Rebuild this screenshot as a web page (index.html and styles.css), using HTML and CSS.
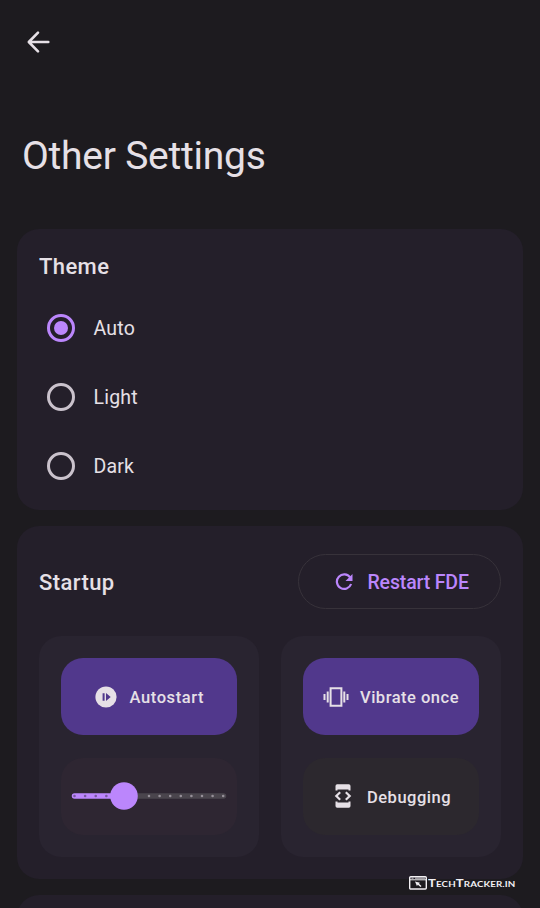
FILE: index.html
```html
<!DOCTYPE html>
<html lang="en">
<head>
<meta charset="utf-8">
<title>Other Settings</title>
<link rel="stylesheet" href="styles.css">
</head>
<body>
<div class="screen">
  <header class="header">
    <svg class="back" width="24" height="24" viewBox="0 0 24 24"><path d="M12 2.700 2.800 12l9.200 9.300M3.500 12H22.300" fill="none" stroke="currentColor" stroke-width="2.600" stroke-linecap="round" stroke-linejoin="round"/></svg>
    <h1 class="title"><span>Other Settings</span></h1>
  </header>
  <main class="cards">
    <section class="card theme">
      <h2 class="heading">Theme</h2>
      <div class="options">
        <label class="option"><span class="radio checked"></span><span class="label">Auto</span></label>
        <label class="option"><span class="radio"></span><span class="label">Light</span></label>
        <label class="option"><span class="radio"></span><span class="label">Dark</span></label>
      </div>
    </section>
    <section class="card startup">
      <div class="row">
        <h2 class="heading">Startup</h2>
        <button class="restart">
          <svg width="18" height="18" viewBox="0 0 18 18"><path d="M15.200 4.500A7.300 7.300 0 1 0 16.100 11" fill="none" stroke="currentColor" stroke-width="2.200"/><path d="M17.500 1v7h-7z" fill="currentColor"/></svg>
          <span class="label">Restart FDE</span>
        </button>
      </div>
      <div class="groups">
        <div class="group">
          <button class="tile active autostart">
            <svg width="22" height="22" viewBox="0 0 22 22"><circle cx="11" cy="11" r="10.600" fill="currentColor"/><path d="M7.600 7.300h2v7.400h-2zM11 7l4.700 4-4.700 4z" fill="#51388c"/></svg>
            <span class="label">Autostart</span>
          </button>
          <div class="tile slider">
            <svg width="156" height="28" viewBox="0 0 156 28">
              <path d="M53 14h99.500" stroke="#4a454d" stroke-width="5.500" stroke-linecap="round"/>
              <path d="M3.500 14h50" stroke="#bb86fc" stroke-width="5.500" stroke-linecap="round"/>
              <path d="M3.500 14H50" stroke="#765a9d" stroke-width="2.600" stroke-linecap="round" stroke-dasharray="0 10.620"/>
              <path d="M78 14h75" stroke="#969099" stroke-width="2.600" stroke-linecap="round" stroke-dasharray="0 10.600"/>
              <circle cx="53" cy="14" r="13.800" fill="#bb86fc"/>
            </svg>
          </div>
        </div>
        <div class="group">
          <button class="tile active vibrate">
            <svg width="26" height="22" viewBox="0 0 26 22"><path d="M7.600 2.300h10.800v17.400H7.600zM4.700 5.500v11M1.500 8v6M21.300 5.500v11M24.500 8v6" fill="none" stroke="currentColor" stroke-width="2"/></svg>
            <span class="label">Vibrate once</span>
          </button>
          <button class="tile debug">
            <svg width="18" height="24" viewBox="0 0 18 24"><path d="M1.500 6.500V2Q1.500.300 3.200.300H14.800Q16.500.300 16.500 2v4.500h-2V5.500h-11v1zM1.500 17.500V22q0 1.700 1.700 1.700h11.600q1.700 0 1.700-1.700v-4.500h-2v1h-11v-1z" fill="currentColor"/><path d="M6.200 8.200 2.300 12l3.900 3.800M11.800 8.200l3.900 3.800-3.900 3.800" fill="none" stroke="currentColor" stroke-width="2.200"/></svg>
            <span class="label">Debugging</span>
          </button>
        </div>
      </div>
    </section>
    <section class="card next"></section>
  </main>
  <div class="watermark">
    <svg width="18" height="14" viewBox="0 0 18 14"><rect x=".7" y=".7" width="16.600" height="12.300" rx="1" fill="none" stroke="currentColor" stroke-width="1.400"/><path d="M1 3.800h16" stroke="currentColor"/><path d="M2.500 2.200h2M6 2.200h10" stroke="currentColor" stroke-width=".8"/><path d="m6 5.500 5 1.200-1 1 2.500 2.300-1 1-2.600-2.300-1 1.300z" fill="currentColor"/></svg>
    <span class="brand">T<small>ECH</small>T<small>RACKER.IN</small></span>
  </div>
</div>
</body>
</html>
```
FILE: styles.css
```css
* { box-sizing: border-box; }
body { margin: 0; background: #1d1b1f; color: #e6e0e6; font-family: Roboto, sans-serif; }
.screen { position: relative; height: 908px; overflow: hidden; }
svg { display: block; flex: none; }
h1, h2 { margin: 0; }
.header { height: 229px; padding: 30px 22px 0; }
.back { margin-left: 4px; }
.title { margin-top: 77px; font-size: 39px; line-height: 50px; font-weight: 400; letter-spacing: -.25px; white-space: nowrap; }
.cards { display: flex; flex-direction: column; gap: 16px; padding: 0 17px; }
.card { border-radius: 22px; background: #241f2a; flex: none; }
.heading { padding-top: 2px; font-size: 22px; line-height: 28px; font-weight: 500; letter-spacing: .4px; }
.label { padding-top: 2px; }
.theme { height: 281px; padding: 22px 22px; }
.options { display: flex; flex-direction: column; margin-top: 12px; }
.option { display: flex; align-items: center; gap: 19px; height: 69px; padding-left: 8px; font-size: 19.500px; letter-spacing: .2px; }
.option .label { margin-left: -.5px; }
.radio { display: flex; align-items: center; justify-content: center; width: 28px; height: 28px; border: 3px solid #cac2cc; border-radius: 50%; }
.checked { border-color: #bb86fc; }
.checked::after { content: ""; width: 14px; height: 14px; border-radius: 50%; background: #bb86fc; }
.startup { height: 353px; padding: 28px 22px 22px; }
.row { display: flex; align-items: center; justify-content: space-between; }
button { font-family: inherit; border: 0; padding: 0; color: inherit; }
.restart { display: flex; align-items: center; gap: 14.500px; width: 203px; height: 55px; padding-left: 36px; border: 1.500px solid #37323a; border-radius: 28px; background: transparent; color: #bb86fc; font-size: 19.500px; font-weight: 500; letter-spacing: -.15px; white-space: nowrap; }
.groups { display: grid; grid-template-columns: 1fr 1fr; gap: 22px; margin-top: 27px; }
.group { display: flex; flex-direction: column; gap: 23px; height: 221px; padding: 22px; border-radius: 22px; background: #292430; }
.tile { display: flex; align-items: center; width: 100%; height: 77px; flex: none; border-radius: 22px; font-size: 16.500px; font-weight: 500; letter-spacing: .5px; white-space: nowrap; }
.active { background: #51388c; }
.autostart { gap: 12.500px; padding-left: 34px; letter-spacing: .6px; }
.vibrate { gap: 11px; padding-left: 20px; }
.slider { padding: 0 0 2px 10px; background: #2e2632; }
.debug { gap: 15px; padding: 0 0 1px 31px; background: #2c282e; }
.next { height: 60px; }
.watermark { position: absolute; left: 409px; top: 875px; display: flex; align-items: center; gap: 1px; color: #f2f0f3; }
.brand { padding-top: 1px; font: 700 10.500px/14px Lato, sans-serif; letter-spacing: .1px; white-space: nowrap; transform: scaleX(1.250); transform-origin: left; }
.brand small { font-size: 7.800px; }
```
